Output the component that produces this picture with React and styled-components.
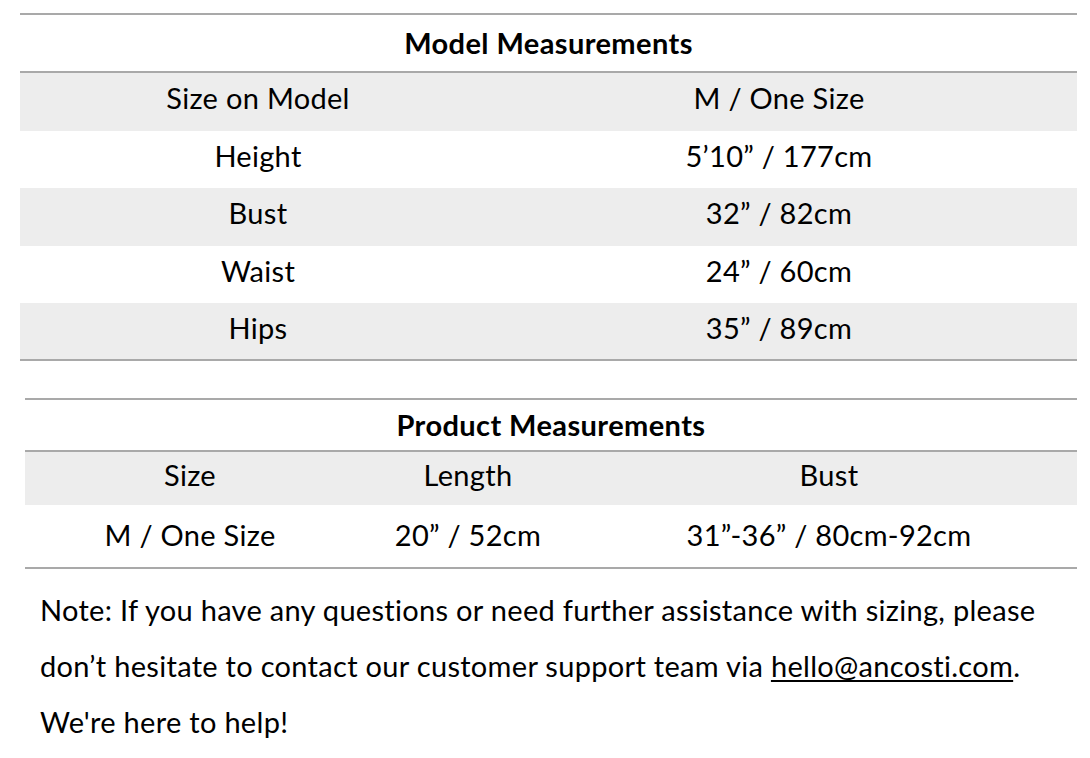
import React from "react";
import styled, { createGlobalStyle } from "styled-components";

const GlobalStyle = createGlobalStyle`
  html, body {
    margin: 0;
    padding: 0;
    background: #ffffff;
  }
  body {
    font-family: Lato, "Open Sans", "Liberation Sans", sans-serif;
    color: #000000;
  }
`;

const Page = styled.div`
  width: 1090px;
  padding: 13px 0 0 20px;
  box-sizing: border-box;
`;

const Table = styled.div`
  width: ${(p) => p.$width}px;
  margin-left: ${(p) => p.$indent || 0}px;
  border-top: 2px solid #a9a9a9;
  border-bottom: 2px solid #a9a9a9;
`;

const TitleRow = styled.div`
  height: ${(p) => p.$h}px;
  padding-bottom: 2px;
  display: flex;
  align-items: center;
  justify-content: center;
  font-size: 29px;
  font-weight: 700;
  letter-spacing: 0.4px;
  border-bottom: 2px solid #a9a9a9;
`;

const Row = styled.div`
  display: grid;
  grid-template-columns: ${(p) => p.$cols};
  height: ${(p) => p.$h}px;
  background: ${(p) => (p.$shaded ? "#ededed" : "#ffffff")};
`;

const Cell = styled.div`
  display: flex;
  align-items: center;
  justify-content: center;
  padding-bottom: ${(p) => (p.$lift ?? 8)}px;
  font-size: 29px;
  letter-spacing: 0.3px;
  white-space: nowrap;
`;

const Gap = styled.div`
  height: 37px;
`;

const Note = styled.p`
  margin: 13px 0 0 20px;
  width: 1040px;
  font-size: 29px;
  letter-spacing: 0.3px;
  line-height: 56px;
  white-space: nowrap;
`;

const Link = styled.a`
  color: #000000;
  text-decoration: underline;
  text-decoration-thickness: 2px;
  text-underline-offset: 3px;
`;

const modelRows = [
  ["Size on Model", "M / One Size"],
  ["Height", "5’10” / 177cm"],
  ["Bust", "32” / 82cm"],
  ["Waist", "24” / 60cm"],
  ["Hips", "35” / 89cm"],
];

const App = () => {
  return (
    <>
      <GlobalStyle />
      <Page>
        {/* model table */}
        <Table $width={1057}>
          <TitleRow $h={54}>Model Measurements</TitleRow>
          {modelRows.map((r, i) => (
            <Row key={r[0]} $cols="476px 566px 1fr" $h={i === 4 ? 56 : 57.5} $shaded={i % 2 === 0}>
              <Cell>{r[0]}</Cell>
              <Cell>{r[1]}</Cell>
              <div />
            </Row>
          ))}
        </Table>

        <Gap />

        {/* product table */}
        <Table $width={1052} $indent={5}>
          <TitleRow $h={48}>Product Measurements</TitleRow>
          <Row $cols="330px 226px 1fr" $h={53} $shaded>
            <Cell>Size</Cell>
            <Cell>Length</Cell>
            <Cell>Bust</Cell>
          </Row>
          <Row $cols="330px 226px 1fr" $h={62}>
            <Cell $lift={4}>M / One Size</Cell>
            <Cell $lift={4}>20” / 52cm</Cell>
            <Cell $lift={4}>31”-36” / 80cm-92cm</Cell>
          </Row>
        </Table>

        <Note>
          Note: If you have any questions or need further assistance with sizing, please
          <br />
          don’t hesitate to contact our customer support team via{" "}
          <Link href="mailto:hello@ancosti.com">hello@ancosti.com</Link>.
          <br />
          We're here to help!
        </Note>
      </Page>
    </>
  );
};

export default App;
